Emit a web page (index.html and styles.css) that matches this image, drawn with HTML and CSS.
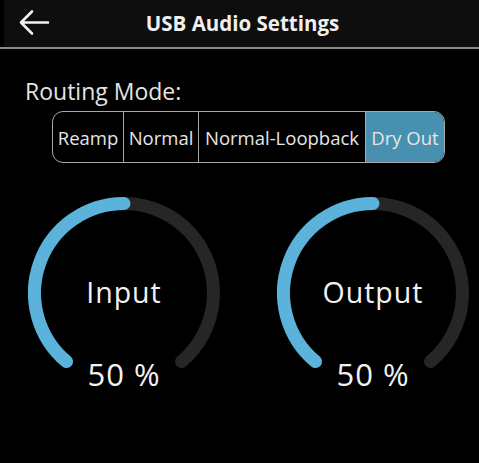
FILE: index.html
```html
<!DOCTYPE html>
<html>
<head>
<meta charset="utf-8">
<link rel="stylesheet" href="styles.css">
</head>
<body>
<div class="app">
  <header class="topbar">
    <svg class="back" width="32" height="30" viewBox="0 0 32 30">
      <path d="M30 13.5 H3 M14 2.5 L3 13.5 L14 24.5" fill="none" stroke="#f2f2f2" stroke-width="2.6" stroke-linecap="round" stroke-linejoin="round"/>
    </svg>
    <h1 class="title">USB Audio Settings</h1>
  </header>
  <main class="content">
    <div class="label">Routing Mode:</div>
    <div class="segmented">
      <div class="seg">Reamp</div>
      <div class="seg">Normal</div>
      <div class="seg">Normal-Loopback</div>
      <div class="seg active">Dry Out</div>
    </div>
    <div class="knobs">
      <div class="knob">
        <svg class="dial" width="206" height="206" viewBox="0 0 206 206">
          <path d="M45.5 171.6 A89.5 89.5 0 1 1 160.5 171.6" fill="none" stroke="#262626" stroke-width="13" stroke-linecap="round"/>
          <path d="M45.5 171.6 A89.5 89.5 0 0 1 103 13.5" fill="none" stroke="#5bb2da" stroke-width="13" stroke-linecap="round"/>
        </svg>
        <div class="knob-name">Input</div>
        <div class="knob-value">50 %</div>
      </div>
      <div class="knob">
        <svg class="dial" width="206" height="206" viewBox="0 0 206 206">
          <path d="M45.5 171.6 A89.5 89.5 0 1 1 160.5 171.6" fill="none" stroke="#262626" stroke-width="13" stroke-linecap="round"/>
          <path d="M45.5 171.6 A89.5 89.5 0 0 1 103 13.5" fill="none" stroke="#5bb2da" stroke-width="13" stroke-linecap="round"/>
        </svg>
        <div class="knob-name">Output</div>
        <div class="knob-value">50 %</div>
      </div>
    </div>
  </main>
</div>
</body>
</html>
```
FILE: styles.css
```css
html, body {
  margin: 0;
  padding: 0;
  background: #000;
}
.app {
  width: 479px;
  height: 463px;
  background: #000;
  font-family: "Open Sans", "Liberation Sans", Arial, sans-serif;
  color: #eee;
  overflow: hidden;
}
.topbar {
  height: 47px;
  background: #0e0e0e;
  border-bottom: 2px solid #8a8a8a;
  box-shadow: inset 4px 0 0 #000;
  display: flex;
  align-items: center;
  position: relative;
}
.back {
  margin-left: 18px;
}
.title {
  margin: 0;
  position: absolute;
  left: 0;
  right: 0;
  top: 9px;
  text-align: center;
  font-size: 20.5px;
  line-height: 28px;
  font-weight: bold;
  color: #f0f0f0;
  pointer-events: none;
  padding-left: 6px;
}
.content {
  padding-top: 27px;
}
.label {
  margin-left: 25px;
  font-size: 23px;
  color: #e4e4e4;
  line-height: 30px;
}
.segmented {
  margin: 5px 0 0 52px;
  width: 393px;
  height: 52px;
  box-sizing: border-box;
  border: 1.5px solid #a8a8a8;
  border-radius: 11px;
  display: flex;
  overflow: hidden;
}
.seg {
  box-sizing: border-box;
  display: flex;
  align-items: center;
  justify-content: center;
  white-space: nowrap;
  font-size: 18.5px;
  color: #e6e6e6;
  border-right: 1.5px solid #a8a8a8;
}
.seg:nth-child(1) { width: 71px; }
.seg:nth-child(2) { width: 75px; }
.seg:nth-child(3) { width: 167px; }
.seg.active {
  flex: 1;
  border-right: none;
  background: #4890b0;
}
.knobs {
  display: flex;
  gap: 43px;
  margin-top: 27px;
  padding-left: 21px;
}
.knob {
  width: 206px;
  height: 206px;
  display: grid;
  grid-template-rows: 206px;
  grid-template-columns: 206px;
}
.dial {
  grid-area: 1 / 1;
}
.knob-name, .knob-value {
  grid-area: 1 / 1;
  justify-self: center;
  font-family: "Open Sans", "Lato", sans-serif;
  color: #f2f2f2;
}
.knob-name {
  font-size: 28.5px;
  letter-spacing: 1px;
  margin-top: 84px;
  line-height: 36px;
  height: 36px;
}
.knob-value {
  font-size: 31px;
  letter-spacing: 1px;
  margin-top: 164px;
  line-height: 40px;
  height: 40px;
}
```
